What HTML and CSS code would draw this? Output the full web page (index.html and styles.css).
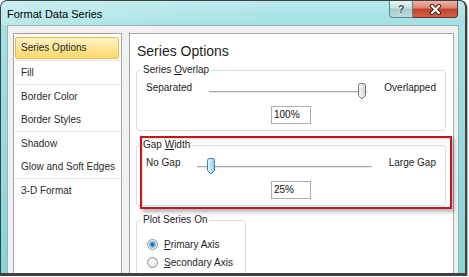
FILE: index.html
```html
<!DOCTYPE html>
<html lang="en">
<head>
    <meta charset="UTF-8">
    <title>Format Data Series</title>
    <link rel="stylesheet" href="styles.css">
</head>
<body>

<div class="window">
    <div class="titlebar">
        <span class="title">Format Data Series</span>
        <div class="caption">
            <span class="btn-help">?</span>
            <span class="btn-close">
                <svg width="13" height="11" viewBox="0 0 13 11">
                    <path d="M3 2 L10 9 M10 2 L3 9" stroke="#4a2018" stroke-width="4.2" stroke-linecap="round"/>
                    <path d="M3 2 L10 9 M10 2 L3 9" stroke="#fff" stroke-width="2.2" stroke-linecap="round"/>
                </svg>
            </span>
        </div>
    </div>

    <div class="client">
        <ul class="nav">
            <li class="active">Series Options</li>
            <li class="sep">Fill</li>
            <li class="sep">Border Color</li>
            <li>Border Styles</li>
            <li class="sep">Shadow</li>
            <li>Glow and Soft Edges</li>
            <li class="sep">3-D Format</li>
        </ul>

        <div class="pane">
            <h2>Series Options</h2>

            <fieldset class="group">
                <legend>Series <u>O</u>verlap</legend>
                <div class="slider-row">
                    <span class="label">Separated</span>
                    <div class="slider" style="--pos: 1">
                        <svg class="thumb" width="10" height="17" viewBox="0 0 10 17">
                            <defs>
                                <linearGradient id="thumb-gray" x1="0" y1="0" x2="1" y2="0">
                                    <stop offset="0" stop-color="#fbfbfb"/>
                                    <stop offset="1" stop-color="#d2d2d2"/>
                                </linearGradient>
                            </defs>
                            <path d="M1.5 2.5 Q1.5 0.5 3.5 0.5 H6.5 Q8.5 0.5 8.5 2.5 V12.5 L5 16 L1.5 12.5 Z" fill="url(#thumb-gray)" stroke="#7a7a7a"/>
                        </svg>
                    </div>
                    <span class="label">Overlapped</span>
                </div>
                <div class="value">100%</div>
            </fieldset>

            <fieldset class="group">
                <legend>Gap <u>W</u>idth</legend>
                <div class="slider-row">
                    <span class="label">No Gap</span>
                    <div class="slider" style="--pos: 0.05">
                        <svg class="thumb" width="10" height="17" viewBox="0 0 10 17">
                            <defs>
                                <linearGradient id="thumb-blue" x1="0" y1="0" x2="1" y2="0">
                                    <stop offset="0" stop-color="#eaf7fd"/>
                                    <stop offset="1" stop-color="#8dcdee"/>
                                </linearGradient>
                            </defs>
                            <path d="M1.5 2.5 Q1.5 0.5 3.5 0.5 H6.5 Q8.5 0.5 8.5 2.5 V12.5 L5 16 L1.5 12.5 Z" fill="url(#thumb-blue)" stroke="#3c7fb1"/>
                        </svg>
                    </div>
                    <span class="label">Large Gap</span>
                </div>
                <div class="value">25%</div>
            </fieldset>

            <fieldset class="group plot">
                <legend>Plot Series On</legend>
                <div class="radio-row first"><span class="radio checked"></span><span><u>P</u>rimary Axis</span></div>
                <div class="radio-row"><span class="radio"></span><span><u>S</u>econdary Axis</span></div>
            </fieldset>

            <!-- annotation drawn over the Gap Width group -->
            <div class="callout"></div>
        </div>
    </div>
</div>

</body>
</html>
```

FILE: styles.css
```css
body { margin: 0; background: #fff; font-family: "Liberation Sans", Arial, sans-serif; font-size: 10px; color: #1e1e1e; }

.window { box-sizing: border-box; width: 467px; height: 276px; display: flex; flex-direction: column; overflow: hidden;
    border: 1px solid #3d4244; border-right-width: 2px; border-bottom-width: 3px; border-radius: 7px 7px 0 0;
    background: linear-gradient(180deg, #b8e9ec 0, #a2e1e4 24px, #86d6da 100%); box-shadow: 1px 1px 1px rgba(0,0,0,.3); }

.titlebar { flex: none; height: 24px; padding: 0 6px; display: flex; justify-content: space-between; align-items: flex-start;
    background: linear-gradient(90deg, rgba(255,255,255,.25), rgba(255,255,255,0) 60%); }
.title { font-size: 11px; line-height: 13px; margin-top: 7px; color: #000; }
.caption { display: flex; margin-right: 1px; }
.btn-help { box-sizing: border-box; width: 24px; height: 17px; border: 1px solid #5f8589; border-top: 0; border-radius: 0 0 0 4px;
    background: linear-gradient(#e8f5f6, #c5e0e2 45%, #a5cbcf 50%, #bcdde0); text-align: center;
    font-weight: bold; font-size: 11px; line-height: 16px; color: #2f4d5b; text-shadow: 0 0 2px #fff, 0 0 1px #fff; }
.btn-close { box-sizing: border-box; width: 45px; height: 17px; border: 1px solid #6e2c22; border-top: 0; border-left: 0; border-radius: 0 0 4px 0;
    background: linear-gradient(#efb4a5, #d98370 45%, #c1432d 50%, #d45f47); display: flex; align-items: center; justify-content: center; }

.client { flex: 1; min-height: 0; overflow: hidden; margin: 0 6px; padding: 7px 4px 0 5px; display: flex; gap: 7px;
    border: 1px solid #98b2b6; border-bottom: 0; background: #f0f0f0; }

.nav { box-sizing: border-box; width: 109px; flex: none; margin: 0; padding: 0; list-style: none; background: #fff;
    border: 1px solid #a6a6a6; border-bottom: 0; color: #2a2a2a; }
.nav li { height: 23px; line-height: 23px; padding-left: 7px; white-space: nowrap; }
.nav li.sep { border-top: 1px solid #e3e8eb; }
.nav li.active { box-sizing: border-box; height: 22px; line-height: 20px; margin: 3px 2px 1px 1px; padding-left: 5px;
    border: 1px solid #e2bc56; border-radius: 2px; background: linear-gradient(#fff4c8, #fee594 50%, #fcd86c); }

.pane { flex: 1; position: relative; padding: 8px 7px 0 6px; background: #fff; border: 1px solid #a3a3a3; border-bottom: 0; }
.pane h2 { margin: 0 0 4px 1px; font-size: 14px; line-height: 18px; font-weight: normal; color: #1e1e1e; }

.group { margin: 0 0 8px; padding: 0 9px 6px 4px; min-width: 0; border: 1px solid #d5dfe5; border-radius: 3px; }
.group legend { padding: 0 2px; line-height: 12px; }
.group.plot { box-sizing: border-box; width: 110px; }

.slider-row { display: flex; align-items: flex-start; margin: 6px 0 0 5px; }
.slider-row .label { line-height: 12px; white-space: nowrap; }
.slider { flex: 1; height: 17px; margin: 1px 17px 0;
    background: linear-gradient(#a9a9a9, #a9a9a9) 0 8px / 100% 1px no-repeat, linear-gradient(#e8e8e8, #e8e8e8) 0 9px / 100% 1px no-repeat; }
.thumb { display: block; margin-left: calc((100% - 10px) * var(--pos)); }

.value { box-sizing: border-box; width: 40px; height: 18px; margin: 6px 0 0 130px; padding-left: 2px; line-height: 16px;
    border: 1px solid #abadb3; background: #fff; color: #111; }

.radio-row { display: flex; align-items: center; gap: 6px; height: 18px; margin-left: 6px; white-space: nowrap; }
.radio-row.first { margin-top: 9px; }
.radio { box-sizing: border-box; width: 11px; height: 11px; flex: none; border-radius: 50%; border: 1px solid #8d9196;
    background: radial-gradient(circle at 50% 40%, #fff, #d9dcdf); }
.radio.checked { background: radial-gradient(circle, #1a5f9e 0, #2f7fc4 1.5px, #8cc0ea 3px, #e6eef5 4px, #fff 5px); }

.callout { position: absolute; left: 10px; top: 102px; box-sizing: border-box; width: 312px; height: 73px;
    border: 2px solid #c4161c; box-shadow: 2px 3px 4px rgba(0,0,0,.3), inset 1px 1px 2px rgba(0,0,0,.15); }
```
